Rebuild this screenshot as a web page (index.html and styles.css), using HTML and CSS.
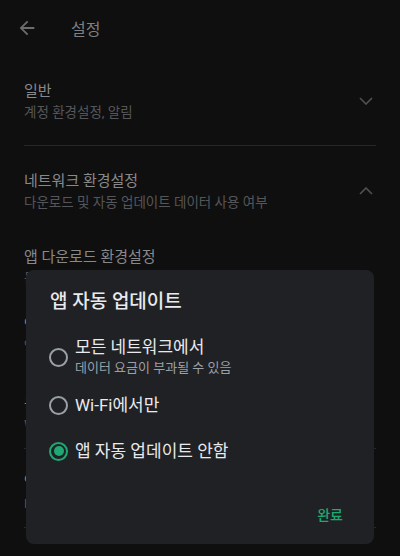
FILE: index.html
```html
<!DOCTYPE html>
<html lang="ko">
<head>
    <meta charset="UTF-8">
    <meta name="viewport" content="width=device-width, initial-scale=1.0">
    <title>설정</title>
    <link rel="stylesheet" href="styles.css">
</head>
<body>
    <header class="topbar">
        <svg class="back" viewBox="0 0 24 24" width="22" height="22">
            <path d="M20 11H7.83l5.59-5.59L12 4l-8 8 8 8 1.41-1.41L7.83 13H20v-2z"/>
        </svg>
        <h1 class="title">설정</h1>
    </header>

    <main class="list">
        <div class="group">
            <div class="text">
                <div class="label">일반</div>
                <div class="sub">계정 환경설정, 알림</div>
            </div>
            <svg class="chev" viewBox="0 0 14 8" width="14" height="8"><polyline points="1,1 7,7 13,1"/></svg>
        </div>
        <div class="divider"></div>
        <div class="group open">
            <div class="text">
                <div class="label">네트워크 환경설정</div>
                <div class="sub">다운로드 및 자동 업데이트 데이터 사용 여부</div>
            </div>
            <svg class="chev" viewBox="0 0 14 8" width="14" height="8"><polyline points="1,7 7,1 13,7"/></svg>
        </div>
        <div class="item first">
            <div class="label">앱 다운로드 환경설정</div>
            <div class="sub">묻지 않음</div>
        </div>
        <div class="item">
            <div class="label">앱 자동 업데이트</div>
            <div class="sub">앱 자동 업데이트 안함</div>
        </div>
        <div class="item">
            <div class="label">동영상 자동재생</div>
            <div class="sub">Wi-Fi에서만</div>
        </div>
        <div class="divider"></div>
        <div class="item">
            <div class="label">앱 보안</div>
            <div class="sub">Play 프로텍트</div>
        </div>
        <div class="divider"></div>
    </main>

    <div class="dialog">
        <h2 class="dialog-title">앱 자동 업데이트</h2>
        <div class="options">
            <div class="option">
                <span class="radio"></span>
                <div>
                    <div class="opt-label">모든 네트워크에서</div>
                    <div class="opt-sub">데이터 요금이 부과될 수 있음</div>
                </div>
            </div>
            <div class="option">
                <span class="radio"></span>
                <div class="opt-label">Wi-Fi에서만</div>
            </div>
            <div class="option last">
                <span class="radio checked"></span>
                <div class="opt-label">앱 자동 업데이트 안함</div>
            </div>
        </div>
        <div class="actions">
            <button class="done">완료</button>
        </div>
    </div>
</body>
</html>
```

FILE: styles.css
```css
body {
    margin: 0;
    background: #0f0f10;
    font-family: Roboto, "Noto Sans CJK KR", sans-serif;
    height: 556px;
    overflow: hidden;
}
.topbar {
    height: 56px;
    display: flex;
    align-items: center;
    padding-left: 16px;
    box-sizing: border-box;
}
.back {
    fill: #6b6c6e;
}
.title {
    margin: 0 0 0 33px;
    font-size: 16px;
    font-weight: 400;
    color: #7e7f81;
}
.list {
    padding: 0 24px;
}
.group {
    display: flex;
    align-items: center;
    justify-content: space-between;
    padding: 24px 0 23px;
}
.group.open {
    padding-bottom: 0;
}
.chev {
    fill: none;
    stroke: #505153;
    stroke-width: 1.6;
    margin-right: 3px;
}
.label {
    font-size: 15px;
    line-height: 22px;
    color: #88898c;
}
.sub {
    font-size: 13.5px;
    line-height: 20px;
    color: #55565a;
}
.divider {
    height: 1px;
    background: #262729;
}
.item {
    padding: 22px 0 0;
    height: 56px;
}
.item.first {
    padding-top: 34px;
    height: 46px;
}
.dialog {
    position: fixed;
    left: 26px;
    top: 270px;
    width: 348px;
    height: 274px;
    background: #202124;
    border-radius: 8px;
    display: flex;
    flex-direction: column;
}
.dialog-title {
    margin: 0;
    padding: 20px 24px 0;
    font-size: 19px;
    line-height: 24px;
    font-weight: 500;
    color: #e8eaed;
}
.options {
    padding-top: 14px;
}
.option {
    display: flex;
    align-items: center;
    padding: 8px 0 8px 23px;
}
.option.last {
    margin-top: 8px;
}
.radio {
    width: 19px;
    height: 19px;
    box-sizing: border-box;
    border: 2px solid #9aa0a6;
    border-radius: 50%;
    margin-right: 7px;
    flex-shrink: 0;
    display: flex;
    align-items: center;
    justify-content: center;
}
.radio.checked {
    border-color: #1ea874;
}
.radio.checked::after {
    content: "";
    width: 10px;
    height: 10px;
    border-radius: 50%;
    background: #1ea874;
}
.opt-label {
    font-size: 17px;
    line-height: 22px;
    color: #e8eaed;
}
.opt-sub {
    font-size: 13px;
    line-height: 20px;
    color: #9aa0a6;
}
.actions {
    margin-top: auto;
    display: flex;
    justify-content: flex-end;
    padding: 0 23px 16px;
}
.done {
    background: none;
    border: none;
    font-family: inherit;
    font-size: 14px;
    font-weight: 500;
    color: #1ea874;
    padding: 4px 8px;
}
```
